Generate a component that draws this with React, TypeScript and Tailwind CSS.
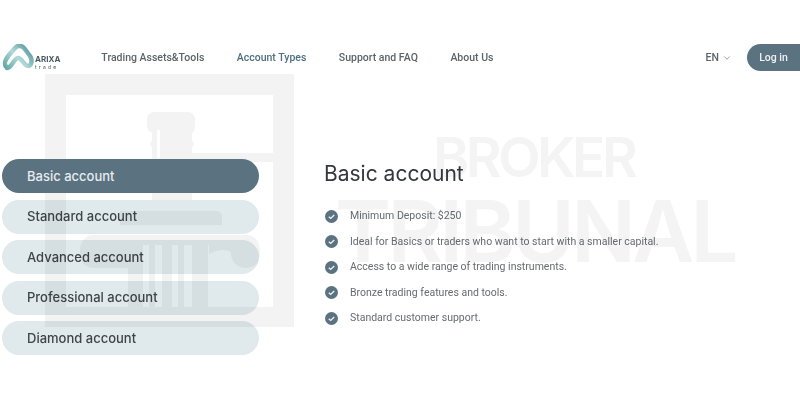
import { ReactElement } from 'react';
import { ChevronDown } from 'lucide-react';

const accounts = ['Basic account', 'Standard account', 'Advanced account', 'Professional account', 'Diamond account'];

const features = [
  'Minimum Deposit: $250',
  'Ideal for Basics or traders who want to start with a smaller capital.',
  'Access to a wide range of trading instruments.',
  'Bronze trading features and tools.',
  'Standard customer support.',
];

function Logo(): ReactElement {
  return (
    <div className="flex items-end">
      <svg width="33" height="27" viewBox="0 0 33 27" fill="none">
        <defs>
          <linearGradient id="arch" x1="0" y1="1" x2="1" y2="0.3">
            <stop offset="0" stopColor="#5fa8a8" />
            <stop offset="0.55" stopColor="#b4dad8" />
            <stop offset="1" stopColor="#5f9ea3" />
          </linearGradient>
        </defs>
        <path
          d="M5 24 C1 20 3 16 7 11 L13 4 C16 1 19 1 22 4 L28 12 C31 17 29 22 26 22 C22 22 20 14 16 14 C12 14 10 24 5 24 Z"
          stroke="url(#arch)"
          strokeWidth="4.5"
          strokeLinejoin="round"
        />
      </svg>
      <div className="flex flex-col font-['Inter',sans-serif] text-[#4a5a62]">
        <span className="text-[8px] leading-[9px] font-bold">ARIXA</span>
        <span className="pb-[1px] text-[5px] leading-[6px] tracking-[2.2px]">trade</span>
      </div>
    </div>
  );
}

// the faded column emblem behind the page
function Watermark(): ReactElement {
  return (
    <svg
      className="pointer-events-none absolute top-[74px] left-[45px] z-10 mix-blend-multiply"
      width="250"
      height="254"
      viewBox="0 0 250 254"
      fill="#f3f3f3"
    >
      <path fillRule="evenodd" d="M0 0H249V253H0Z M21 21V233H228V21Z" />
      <path d="M102 46Q102 38 110 38H142Q150 38 150 46V52Q150 57 147 59V66L149 70L147 74V126H107V74L105 70L107 66V59Q102 57 102 52Z" />
      <path d="M147 79H228V88H147Z" />
      <path d="M112 56H115V84H112Z" fill="#ffffff" />
      <path d="M75 137H171Q177 137 177 144V151H75Z" />
      <path d="M50 161H200Q215 161 215 178Q215 194 200 194Q186 192 186 178Q178 173 164 180V171H83V194H50Q35 194 35 178Q35 161 50 161Z" />
      <path d="M83 171H98V253H83Z M104 171H110V253H104Z M117 171H127V253H117Z M133 171H139V253H133Z M147 171H163V253H147Z" />
    </svg>
  );
}

export default function App(): ReactElement {
  return (
    <div className="relative h-[400px] w-[800px] overflow-hidden bg-white font-['Roboto',sans-serif] blur-[0.4px]">
      <header className="flex h-[115px] items-center pl-[2px]">
        <Logo />
        <nav className="ml-[41px] flex gap-[32.5px] text-[10.5px] font-medium text-[#5c6469]">
          <span>Trading Assets&amp;Tools</span>
          <span className="text-[#4f6f7f]">Account Types</span>
          <span>Support and FAQ</span>
          <span>About Us</span>
        </nav>
        <div className="ml-auto flex items-center text-[10.5px] font-medium text-[#5c6469]">
          <span>EN</span>
          <ChevronDown className="ml-[3px] size-[10px]" strokeWidth={1.5} />
          <button className="ml-[15px] h-[27px] w-[53px] rounded-l-full rounded-r-[14px] bg-[#5b7280] text-[#eef2f4]">
            Log in
          </button>
        </div>
      </header>

      <main className="flex pt-[44px] pl-[2px]">
        <div className="flex w-[257px] flex-col gap-[6.5px] font-['Inter',sans-serif] text-[13px] font-medium">
          {accounts.map((name, i) => (
            <div
              key={name}
              className={
                i === 0
                  ? 'relative z-20 flex h-[34px] items-center rounded-full bg-[#5b7280] pt-[1px] pl-[25px] text-[#e6ecef]'
                  : 'flex h-[34px] items-center rounded-full bg-[#e0e9eb] pt-[1px] pl-[25px] text-[#3e4549]'
              }
            >
              {name}
            </div>
          ))}
        </div>

        <section className="ml-[65px]">
          <h1 className="font-['Inter',sans-serif] text-[21px] leading-[30px] text-[#33383b]">Basic account</h1>
          <ul className="mt-[20px] ml-[1px] flex flex-col gap-[11.5px] text-[10.5px] leading-[14px] text-[#666c70]">
            {features.map((text) => (
              <li key={text} className="flex items-center">
                <svg width="13" height="13" viewBox="0 0 13 13" className="shrink-0">
                  <circle cx="6.5" cy="6.5" r="6.5" fill="#5b7280" />
                  <path d="M3.8 6.7L5.7 8.4L9.2 4.9" fill="none" stroke="#eef2f4" strokeWidth="1.4" />
                </svg>
                <span className="ml-[12px] whitespace-nowrap">{text}</span>
              </li>
            ))}
          </ul>
        </section>
      </main>

      <Watermark />
      <div className="pointer-events-none absolute top-[123px] left-[433px] z-10 font-['Inter',sans-serif] text-[55px] leading-[68px] font-semibold tracking-[-3.5px] text-[#f4f4f4] mix-blend-multiply">
        BROKER
      </div>
      <div className="pointer-events-none absolute top-[180px] left-[335px] z-10 font-['Inter',sans-serif] text-[85px] leading-[103px] font-semibold tracking-[-3.5px] text-[#f4f4f4] mix-blend-multiply">
        TRIBUNAL
      </div>
    </div>
  );
}
